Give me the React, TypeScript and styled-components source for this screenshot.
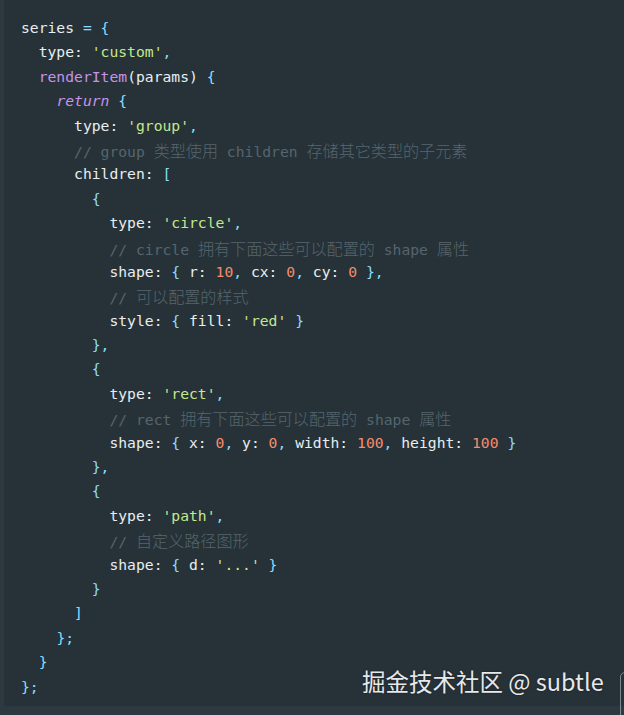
import React from "react";
import styled, { createGlobalStyle } from "styled-components";

const Global = createGlobalStyle`
  html, body { margin: 0; padding: 0; background: #2d3941; }
  body { width: 624px; height: 715px; overflow: hidden; }
`;

type Kind = "plain" | "str" | "num" | "punc" | "kw" | "fn" | "com";

const colors: Record<Kind, string> = {
  plain: "#e8eef1",
  str: "#c3e88d",
  num: "#f78c6c",
  punc: "#89ddff",
  kw: "#c792ea",
  fn: "#c792ea",
  com: "#56656d",
};

const Frame = styled.div`
  position: relative;
  width: 624px;
  height: 715px;
`;

const Block = styled.pre`
  margin: 0 0 0 4px;
  height: 706px;
  box-sizing: border-box;
  padding: 16px 0 0 17px;
  background: #263238;
  font-family: "DejaVu Sans Mono", "Noto Sans CJK SC", monospace;
  font-size: 14.7px;
  line-height: 24.4px;
  color: ${colors.plain};
  overflow: hidden;
`;

const Line = styled.div`
  height: 24.4px;
  white-space: pre;
`;

const Tok = styled.span<{ $k: Kind }>`
  color: ${(p) => colors[p.$k]};
  font-style: ${(p) => (p.$k === "kw" ? "italic" : "normal")};
`;

const Cjk = styled.span`
  font-family: "Noto Sans CJK SC", sans-serif;
  font-weight: 300;
  font-size: 16.1px;
  line-height: 24.4px;
`;

const Watermark = styled.div`
  position: absolute;
  left: 362px;
  top: 665px;
  font-family: "Noto Sans CJK SC", "Noto Sans", sans-serif;
  font-size: 23.5px;
  line-height: 32px;
  color: #e6e8ea;
  text-shadow: 0 0 2px rgba(0, 0, 0, 0.5);
  white-space: nowrap;
`;

const EdgeButton = styled.div`
  position: absolute;
  left: 620px;
  top: 672px;
  width: 24px;
  height: 60px;
  border: 1px solid #7f8890;
  border-radius: 5px;
  box-sizing: border-box;
`;

type T = [Kind, string];

const P = (s: string): T => ["punc", s];
const X = (s: string): T => ["plain", s];
const S = (s: string): T => ["str", s];
const N = (s: string): T => ["num", s];
const C = (s: string): T => ["com", s];

const lines: T[][] = [
  [X("series "), P("="), X(" "), P("{")],
  [X("  type: "), S("'custom'"), P(",")],
  [X("  "), ["fn", "renderItem"], X("(params) "), P("{")],
  [X("    "), ["kw", "return"], X(" "), P("{")],
  [X("      type: "), S("'group'"), P(",")],
  [X("      "), C("// group 类型使用 children 存储其它类型的子元素")],
  [X("      children: "), P("[")],
  [X("        "), P("{")],
  [X("          type: "), S("'circle'"), P(",")],
  [X("          "), C("// circle 拥有下面这些可以配置的 shape 属性")],
  [X("          shape: "), P("{"), X(" r: "), N("10"), P(","), X(" cx: "), N("0"), P(","), X(" cy: "), N("0"), X(" "), P("},")],
  [X("          "), C("// 可以配置的样式")],
  [X("          style: "), P("{"), X(" fill: "), S("'red'"), X(" "), P("}")],
  [X("        "), P("},")],
  [X("        "), P("{")],
  [X("          type: "), S("'rect'"), P(",")],
  [X("          "), C("// rect 拥有下面这些可以配置的 shape 属性")],
  [X("          shape: "), P("{"), X(" x: "), N("0"), P(","), X(" y: "), N("0"), P(","), X(" width: "), N("100"), P(","), X(" height: "), N("100"), X(" "), P("}")],
  [X("        "), P("},")],
  [X("        "), P("{")],
  [X("          type: "), S("'path'"), P(",")],
  [X("          "), C("// 自定义路径图形")],
  [X("          shape: "), P("{"), X(" d: "), S("'...'"), X(" "), P("}")],
  [X("        "), P("}")],
  [X("      "), P("]")],
  [X("    "), P("};")],
  [X("  "), P("}")],
  [P("};")],
];

const renderText = (k: Kind, s: string) => {
  if (k !== "com") return s;
  const parts = s.split(/([\u4e00-\u9fff]+)/);
  return parts.map((p, i) =>
    /[\u4e00-\u9fff]/.test(p) ? <Cjk key={i}>{p}</Cjk> : <React.Fragment key={i}>{p}</React.Fragment>
  );
};

export default function App() {
  return (
    <Frame>
      <Global />
      <Block>
        {lines.map((ln, i) => (
          <Line key={i}>
            {ln.map(([k, s], j) => (
              <Tok key={j} $k={k}>
                {renderText(k, s)}
              </Tok>
            ))}
          </Line>
        ))}
      </Block>
      <Watermark>掘金技术社区 @ subtle</Watermark>
      <EdgeButton />
    </Frame>
  );
}
